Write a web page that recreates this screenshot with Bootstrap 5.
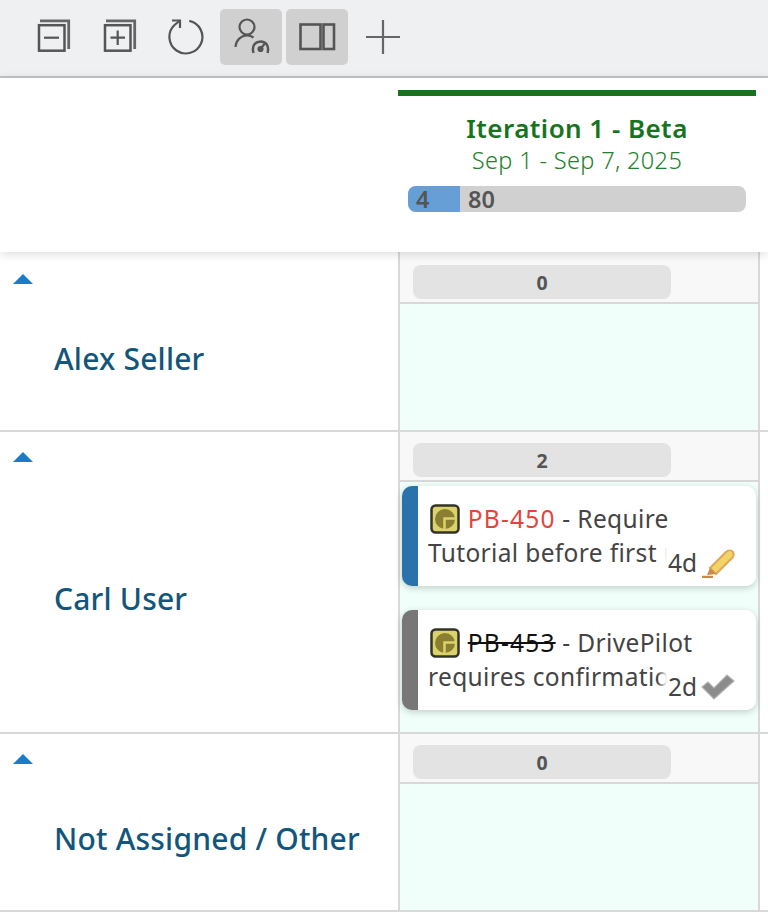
<!DOCTYPE html>
<html lang="en"><head><meta charset="utf-8"><title>Board</title>
<link href="https://cdn.jsdelivr.net/npm/bootstrap@5.3.0/dist/css/bootstrap.min.css" rel="stylesheet">
<style>
html,body{height:100%}
body{font-family:"Noto Sans","Open Sans",sans-serif;background:#fff;color:#444;overflow:hidden}
.tbar{height:78px;background:#eff0f2;border-bottom:2px solid #c4c4c4;padding:9px 0 0 22px;gap:4px;align-items:flex-start}
.tbtn{width:62px;height:56px;padding:0;border:0;border-radius:5px;display:flex;align-items:center;justify-content:center}
.tbtn.on{background:#d0d0d0}
.tbtn svg{fill:none;stroke:#555;stroke-width:2.2}
.grid-row{display:grid;grid-template-columns:398px 362px 1fr}
.head-row{height:174px;position:relative;z-index:2;background:#fff;box-shadow:0 2px 10px rgba(0,0,0,.14)}
.iter{margin-top:12px;height:162px;width:358px;border-top:6px solid #17741e;text-align:center;color:#17741e;padding-top:16px}
.iter-t{font-size:26px;font-weight:600;line-height:32px;letter-spacing:.45px}
.iter-d{font-size:23.500px;font-weight:300;line-height:32px;color:#23802a;letter-spacing:.35px}
.pbar{margin:10px 10px 0;height:26px;border-radius:8px;background:#d0d0d0;display:flex;text-align:left;font-weight:600;font-size:23.500px;line-height:26px;color:#555}
.pbar .seg{width:52px;background:#659fd5;padding-left:8px;border-radius:8px 0 0 8px}
.pbar .rest{padding-left:8px}
.lane{border-bottom:2px solid #d8d8d8;height:178px}
.lane.first{height:180px}
.lane.tall{height:302px}
.lane-l{display:flex;flex-direction:column;padding-left:13px}
.caret{width:0;height:0;border-left:10px solid transparent;border-right:10px solid transparent;border-bottom:10px solid #1a7bc9;margin-top:20px}
.first .caret{margin-top:22px}
.lane-n{flex:1;display:flex;align-items:center;padding-left:42px;font-size:30px;font-weight:500;color:#12567c;padding-top:2px;letter-spacing:.2px;margin-left:-1px}
.lane-c{border-left:2px solid #d8d8d8;border-right:2px solid #d8d8d8;display:flex;flex-direction:column}
.subh{height:50px;background:#f8f8f8;border-bottom:2px solid #d8d8d8;padding:11px 0 0 13px}
.first .subh{height:52px;padding-top:13px}
.pill{width:258px;height:34px;border-radius:8px;background:#e3e3e3;color:#555;font-weight:700;font-size:19.500px;line-height:36px;text-align:center}
.cellb{flex:1;background:#f0fffa;padding:4px 2px 0;display:flex;flex-direction:column;gap:24px}
.tcard{height:100px;width:354px;background:#fff;border-radius:10px;box-shadow:0 2px 7px rgba(0,0,0,.2);border-left:16px solid #2a72ab;position:relative;overflow:hidden;padding:16px 10px 0 10px;font-size:24.500px;line-height:34px;color:#444;letter-spacing:.35px}
.tcard.done{border-left-color:#777}
.ttxt{height:68px;overflow:hidden}
.ttxt svg{vertical-align:-6px;margin:0 1px 0 2px}
.kid{color:#e2453c;letter-spacing:1.200px}
.kid.st{color:#111;text-decoration:line-through}
.tmeta{position:absolute;right:0;bottom:0;width:99px;height:48px;display:flex;align-items:flex-end;padding:0 21px 8px 0;justify-content:flex-end;gap:4px;background:linear-gradient(90deg,rgba(255,255,255,0),#fff 10px);line-height:30px;letter-spacing:0}
</style></head><body>
<div class="d-flex tbar">
<button class="btn tbtn" aria-label="Collapse"><svg width="40" height="40" viewBox="0 0 40 40"><rect x="6" y="8.200" width="25.500" height="25.500" stroke-width="2.500"/><path d="M7 3.800H35.700V32" stroke-width="2.800" stroke="#666"/><path d="M11 20.700H26"/></svg></button>
<button class="btn tbtn" aria-label="Expand"><svg width="40" height="40" viewBox="0 0 40 40"><rect x="6" y="8.200" width="25.500" height="25.500" stroke-width="2.500"/><path d="M7 3.800H35.700V32" stroke-width="2.800" stroke="#666"/><path d="M11.500 20.700H26M18.700 13.500V28"/></svg></button>
<button class="btn tbtn" aria-label="Refresh"><svg width="40" height="40" viewBox="0 0 40 40"><path d="M24.300 3.800A16.500 16.500 0 1 1 9.500 8L15 3.500"/><path d="M7 3.500H15V11"/></svg></button>
<button class="btn tbtn on" aria-label="Capacity"><svg width="40" height="40" viewBox="0 0 40 40"><circle cx="16" cy="10" r="7.500"/><path d="M4.500 30C5 23 10 18.500 16 18.500C18.500 18.500 20.500 19 22.500 20.500"/><path d="M22.500 36C20.500 29 24 24.500 29.500 24.500S38.500 29 36.500 36" stroke-width="2.500"/><circle cx="29.500" cy="32" r="2" fill="#555"/><path d="M30 31L33.500 27"/></svg></button>
<button class="btn tbtn on" aria-label="Side panel"><svg width="40" height="40" viewBox="0 0 40 40"><rect x="3.500" y="7.500" width="20" height="24.500" stroke-width="2.600"/><rect x="26.500" y="7.500" width="10.500" height="24.500" stroke-width="2.600"/></svg></button>
<button class="btn tbtn" aria-label="Add"><svg width="40" height="40" viewBox="0 0 40 40"><path d="M3 20H37M20 3V37" stroke="#666"/></svg></button>
</div>
<div class="grid-row head-row"><div></div><div class="iter"><div class="iter-t">Iteration 1 - Beta</div><div class="iter-d">Sep 1 - Sep 7, 2025</div><div class="pbar"><div class="seg">4</div><div class="rest">80</div></div></div><div></div></div>

<div class="grid-row lane first"><div class="lane-l"><div class="caret"></div><div class="lane-n">Alex Seller</div></div><div class="lane-c"><div class="subh"><div class="pill">0</div></div><div class="cellb"></div></div><div></div></div>

<div class="grid-row lane tall"><div class="lane-l"><div class="caret"></div><div class="lane-n">Carl User</div></div><div class="lane-c"><div class="subh"><div class="pill">2</div></div><div class="cellb">
<div class="tcard"><div class="ttxt"><svg width="30" height="30" viewBox="0 0 30 30"><rect x="1.500" y="1.500" width="27" height="27" rx="4" fill="#dcd26c" stroke="#33332a" stroke-width="2.500"/><circle cx="15" cy="15" r="10" fill="#8a7f30"/><path d="M14.500 26V14.500H26" fill="none" stroke="#dcd26c" stroke-width="2.500"/></svg> <span class="kid">PB-450</span> - Require Tutorial before first use in app</div><div class="tmeta"><span>4d</span><svg width="34" height="30" viewBox="0 0 34 30"><path d="M9 20L25 4C27 2 30 2 32 4C33 6 33 8 31 10L15 26Z" fill="#f1d566" stroke="#e0a65a" stroke-width="2"/><path d="M9 20L6 27L15 26Z" fill="#c88a4a"/><path d="M1 29H12" stroke="#c98a46" stroke-width="2.500"/></svg></div></div>
<div class="tcard done"><div class="ttxt"><svg width="30" height="30" viewBox="0 0 30 30"><rect x="1.500" y="1.500" width="27" height="27" rx="4" fill="#dcd26c" stroke="#33332a" stroke-width="2.500"/><circle cx="15" cy="15" r="10" fill="#8a7f30"/><path d="M14.500 26V14.500H26" fill="none" stroke="#dcd26c" stroke-width="2.500"/></svg> <span class="kid st">PB-453</span> - DrivePilot requires confirmation before use</div><div class="tmeta"><span>2d</span><svg width="34" height="30" viewBox="0 0 34 30"><path d="M1 15L7 10L13 16L26 3L33 9L13 27Z" fill="#8c8c8c" stroke="#b4b4b4" stroke-width="1.200"/></svg></div></div>
</div></div><div></div></div>

<div class="grid-row lane"><div class="lane-l"><div class="caret"></div><div class="lane-n">Not Assigned / Other</div></div><div class="lane-c"><div class="subh"><div class="pill">0</div></div><div class="cellb"></div></div><div></div></div>
<script src="https://cdn.jsdelivr.net/npm/bootstrap@5.3.0/dist/js/bootstrap.bundle.min.js"></script>
</body></html>
